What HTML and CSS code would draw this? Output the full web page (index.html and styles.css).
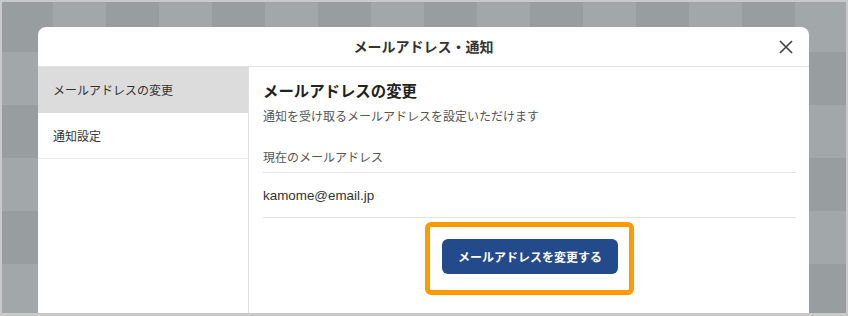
FILE: index.html
```html
<!DOCTYPE html>
<html lang="ja">
<head>
<meta charset="utf-8">
<title>メールアドレス・通知</title>
<link rel="stylesheet" href="styles.css">
</head>
<body>
<div class="frame">
  <div class="modal">
    <div class="modal-header">
      <span class="spacer"></span>
      <h1 class="modal-title">メールアドレス・通知</h1>
      <button class="close" aria-label="閉じる">
        <svg width="14" height="14" viewBox="0 0 14 14"><path d="M1 1L13 13M13 1L1 13" stroke="#444" stroke-width="1.7" fill="none"/></svg>
      </button>
    </div>
    <div class="modal-body">
      <nav class="sidebar">
        <div class="nav-item active">メールアドレスの変更</div>
        <div class="nav-item">通知設定</div>
      </nav>
      <section class="content">
        <h2 class="heading">メールアドレスの変更</h2>
        <p class="desc">通知を受け取るメールアドレスを設定いただけます</p>
        <div class="row label-row">現在のメールアドレス</div>
        <div class="row email-row">kamome@email.jp</div>
        <div class="actions">
          <div class="highlight">
            <button class="primary">メールアドレスを変更する</button>
          </div>
        </div>
      </section>
    </div>
  </div>
</div>
</body>
</html>
```
FILE: styles.css
```css
* { box-sizing: border-box; }
html, body { margin: 0; padding: 0; }
body {
  font-family: "Liberation Sans", "Noto Sans CJK JP", sans-serif;
  color: #333;
}
.frame {
  width: 848px;
  height: 316px;
  border: 2px solid #c9c9c9;
  border-bottom-width: 3px;
  overflow: hidden;
  padding: 25px 0 0 36px;
  background-origin: border-box;
  background-image: repeating-conic-gradient(#a2a7a9 0 25%, #989d9f 0 50%);
  background-size: 106px 106px;
  background-position: 0 -1px;
}
.modal {
  width: 771px;
  height: 320px;
  background: #fff;
  border-radius: 8px 8px 0 0;
  display: flex;
  flex-direction: column;
}
.modal-header {
  height: 40px;
  border-bottom: 1px solid #e0e0e0;
  display: grid;
  grid-template-columns: 1fr auto 1fr;
  align-items: center;
}
.modal-title {
  margin: 0;
  font-size: 14px;
  font-weight: bold;
  color: #333;
  line-height: 20px;
  padding-top: 1px;
}
.close {
  justify-self: end;
  margin-right: 16px;
  width: 14px;
  height: 14px;
  padding: 0;
  border: 0;
  background: none;
  display: flex;
  margin-top: 1px;
}
.modal-body {
  flex: 1;
  display: flex;
}
.sidebar {
  width: 211px;
  border-right: 1px solid #e0e0e0;
}
.nav-item {
  height: 46px;
  padding-left: 15px;
  display: flex;
  align-items: center;
  font-size: 12px;
  color: #333;
  border-bottom: 1px solid #ebebeb;
}
.nav-item.active {
  background: #dcdcdc;
  border-bottom-color: #dcdcdc;
}
.content {
  flex: 1;
  padding: 15px 13px 0 14px;
}
.heading {
  margin: 0;
  font-size: 15.4px;
  line-height: 20px;
  font-weight: bold;
  color: #222;
}
.desc {
  margin: 6px 0 0;
  font-size: 12px;
  line-height: 18px;
  color: #555;
}
.row {
  border-bottom: 1px solid #e3e3e3;
  display: flex;
  align-items: center;
}
.label-row {
  margin-top: 22px;
  height: 25px;
  padding-bottom: 7px;
  font-size: 12px;
  color: #555;
}
.email-row {
  height: 45px;
  font-size: 13.4px;
  color: #333;
}
.actions {
  display: flex;
  justify-content: center;
  padding-top: 4px;
}
.highlight {
  border: 5px solid #ff9a00;
  border-radius: 6px;
  padding: 12px 11px 16px 12px;
}
.primary {
  display: block;
  height: 35px;
  padding: 0 16px;
  border: 0;
  border-radius: 6px;
  background: #234a8a;
  color: #fff;
  font-family: inherit;
  font-size: 12px;
  font-weight: bold;
}
```
